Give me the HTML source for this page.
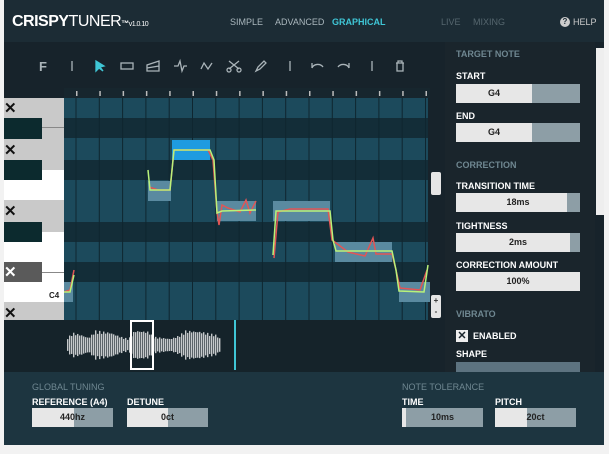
<!DOCTYPE html>
<html><head><meta charset="utf-8"><style>
*{margin:0;padding:0;box-sizing:border-box}
body{width:609px;height:454px;background:#f2f2f2;position:relative;overflow:hidden;font-family:"Liberation Sans",sans-serif;font-weight:bold}
.a{position:absolute}
#app{left:4px;top:0;width:600px;height:445px;background:#17232b}
.t{position:absolute;font-size:9px;color:#fff;white-space:nowrap}
.g{color:#6f8791;font-weight:normal}
.box{position:absolute;height:19px;background:#8d9ea6;overflow:hidden}
.box i{position:absolute;left:0;top:0;bottom:0;background:#e7e7e7}
.box span{position:absolute;left:0;right:0;top:4px;text-align:center;font-size:9px;color:#222}
.key{position:absolute;left:4px;width:60px;font-size:15px;line-height:1}
</style></head><body>
<div id="app" class="a"></div>
<div class="a" style="left:4px;top:0;width:600px;height:42px;background:#1c2c35"></div>
<div class="t" style="left:12px;top:13px;font-size:16px;letter-spacing:-0.5px">CRISPY<span style="font-weight:normal">TUNER</span><span style="font-size:8px">™</span><span style="font-size:7px;font-weight:normal">v1.0.10</span></div>
<div class="t" style="left:230px;top:17px;font-weight:normal;color:#aab7bd">SIMPLE</div>
<div class="t" style="left:275px;top:17px;font-weight:normal;color:#aab7bd">ADVANCED</div>
<div class="t" style="left:332px;top:17px;color:#3fc6d6">GRAPHICAL</div>
<div class="t" style="left:441px;top:17px;font-weight:normal;color:#55666e">LIVE</div>
<div class="t" style="left:473px;top:17px;font-weight:normal;color:#55666e">MIXING</div>
<div class="a" style="left:560px;top:17px;width:10px;height:10px;border-radius:50%;background:#ccc;color:#1c2c35;font-size:8px;text-align:center;line-height:10px">?</div>
<div class="t" style="left:573px;top:17px;font-weight:normal;color:#ccc">HELP</div>
<svg class="a" style="left:0;top:50px" width="440" height="32" stroke="#aab4b9" fill="none" stroke-width="1.3">
<text x="39" y="21" fill="#aab4b9" stroke="none" font-size="13" font-family="Liberation Sans" font-weight="bold">F</text>
<line x1="72" y1="11" x2="72" y2="21"/><line x1="290" y1="11" x2="290" y2="21"/><line x1="372" y1="11" x2="372" y2="21"/>
<path d="M96 11 L96 21 L99 18 L103 21 L100 17 L104 16 Z" fill="#3fc6d6" stroke="#3fc6d6"/>
<rect x="121" y="13" width="12" height="6"/>
<path d="M147 21 L159 21 L159 11 L147 15 Z M147 18 L159 16"/>
<path d="M174 16 L178 16 L180 11 L182 21 L184 16 L187 16"/>
<path d="M201 19 L204 13 L208 19 L212 13"/>
<path d="M229 11 L239 19 M239 11 L229 19"/><circle cx="229" cy="20" r="2"/><circle cx="239" cy="20" r="2"/>
<path d="M256 21 L258 17 L264 11 L266 13 L260 19 Z"/>
<path d="M312 18 A6 5 0 0 1 323 17 M312 18 L312 13"/>
<path d="M349 18 A6 5 0 0 0 338 17 M349 18 L349 13"/>
<path d="M396 13 L404 13 M398 13 L398 11 L402 11 L402 13 M397 13 L397 21 L403 21 L403 13"/>
</svg>
<div class="a" style="left:64px;top:88px;width:366px;height:10px;background:#17262e"></div>
<svg class="a" style="left:0;top:0" width="445" height="372">
<g fill="#1c4a5c">
<rect x="64" y="98" width="364" height="20"/><rect x="64" y="138" width="364" height="22"/><rect x="64" y="180" width="364" height="42"/><rect x="64" y="242" width="364" height="20"/><rect x="64" y="282" width="364" height="38"/></g>
<g fill="#132d38"><rect x="64" y="118" width="364" height="20"/><rect x="64" y="160" width="364" height="20"/><rect x="64" y="222" width="364" height="20"/><rect x="64" y="262" width="364" height="20"/></g>
<g stroke="#0f2630" stroke-width="1" id="vl"></g>
<g fill="#bbb" id="ticks"></g>
<g fill="#5a8aa0"><rect x="64" y="282" width="9" height="20"/><rect x="148" y="181" width="23" height="20"/><rect x="217" y="201" width="39" height="20"/><rect x="273" y="201" width="57" height="20"/><rect x="335" y="242" width="57" height="20"/><rect x="399" y="282" width="31" height="20"/></g>
<rect x="172" y="140" width="38" height="20" fill="#1e9be0"/>
<g fill="none" stroke-width="1.5">
<path stroke="#e25555" d="M64 292 L70 290 L74 270 M149 187 L158 190 L170 190 L174 150 L208 150 L213 160 L217 212 L219 225 L222 205 L228 208 L240 212 L246 200 L250 213 L256 201 M274 258 L278 212 L290 209 L328 209 L332 240 L348 252 L365 256 L373 238 L376 254 L392 254 L396 270 L400 288 L420 290 L427 270"/>
<path stroke="#b9f27a" d="M64 292 L70 292 L74 275 M148 170 L150 190 L170 190 L174 150 L210 150 L214 160 L217 213 L222 211 L256 210 M273 255 L276 211 L330 211 L333 240 L336 251 L392 251 L396 270 L399 291 L424 292 L428 265"/>
</g>
<rect x="64" y="320" width="366" height="52" fill="#15232a"/>
<rect x="4" y="320" width="60" height="52" fill="#15232a"/>
<g fill="#c5c9cb" id="wave"></g>
<rect x="131" y="321" width="22" height="48" fill="none" stroke="#fff" stroke-width="2"/>
<rect x="234" y="320" width="2" height="50" fill="#3fc6d6"/>
</svg>
<div class="a" style="left:4px;top:98px;width:60px;height:222px;background:#fff"></div>
<div class="a" style="left:4px;top:98px;width:60px;height:30px;background:#c9c9c9;border-bottom:1px solid #888"></div>
<div class="a" style="left:4px;top:128px;width:60px;height:42px;background:#c9c9c9"></div>
<div class="a" style="left:4px;top:200px;width:60px;height:32px;background:#c9c9c9"></div>
<div class="a" style="left:4px;top:302px;width:60px;height:18px;background:#c9c9c9"></div>
<div class="a" style="left:4px;top:118px;width:38px;height:21px;background:#0c2a2e"></div>
<div class="a" style="left:4px;top:160px;width:38px;height:20px;background:#0c2a2e"></div>
<div class="a" style="left:4px;top:222px;width:38px;height:20px;background:#0c2a2e"></div>
<div class="a" style="left:4px;top:262px;width:38px;height:20px;background:#5a5a5a"></div>
<div class="a" style="left:42px;top:272px;width:22px;height:1px;background:#888"></div>
<div class="key" style="top:101px;color:#111">✕</div>
<div class="key" style="top:143px;color:#111">✕</div>
<div class="key" style="top:204px;color:#111">✕</div>
<div class="key" style="top:265px;color:#fff">✕</div>
<div class="key" style="top:306px;color:#111">✕</div>
<div class="t" style="left:49px;top:291px;color:#222;font-size:8px">C4</div>
<div class="a" style="left:431px;top:172px;width:10px;height:23px;background:#e5e5e5;border-radius:2px"></div>
<div class="a" style="left:431px;top:295px;width:10px;height:23px;background:#e5e5e5;border-radius:2px;font-size:8px;color:#333;text-align:center;line-height:11px">+<br>-</div>
<div class="a" style="left:445px;top:42px;width:150px;height:330px;background:#1a252c"></div>
<div class="a" style="left:596px;top:48px;width:8px;height:167px;background:#eee"></div>
<div class="t g" style="left:456px;top:49px;font-weight:bold">TARGET NOTE</div>
<div class="t" style="left:456px;top:71px">START</div>
<div class="box" style="left:456px;top:84px;width:124px"><i style="width:76px"></i><span style="right:48px">G4</span></div>
<div class="t" style="left:456px;top:111px">END</div>
<div class="box" style="left:456px;top:123px;width:124px"><i style="width:76px"></i><span style="right:48px">G4</span></div>
<div class="t g" style="left:456px;top:160px;font-weight:bold">CORRECTION</div>
<div class="t" style="left:456px;top:181px">TRANSITION TIME</div>
<div class="box" style="left:456px;top:193px;width:124px"><i style="width:111px"></i><span>18ms</span></div>
<div class="t" style="left:456px;top:221px">TIGHTNESS</div>
<div class="box" style="left:456px;top:233px;width:124px"><i style="width:114px"></i><span>2ms</span></div>
<div class="t" style="left:456px;top:260px">CORRECTION AMOUNT</div>
<div class="box" style="left:456px;top:272px;width:124px"><i style="width:124px"></i><span>100%</span></div>
<div class="t g" style="left:456px;top:309px;font-weight:bold">VIBRATO</div>
<div class="a" style="left:456px;top:330px;width:12px;height:12px;background:#eee;color:#1a252c;font-size:11px;line-height:12px;text-align:center">✕</div>
<div class="t" style="left:473px;top:331px">ENABLED</div>
<div class="t" style="left:456px;top:349px">SHAPE</div>
<div class="a" style="left:456px;top:362px;width:124px;height:10px;background:#5d7380"></div>
<div class="a" style="left:4px;top:372px;width:600px;height:73px;background:#1d3540"></div>
<div class="t g" style="left:32px;top:382px">GLOBAL TUNING</div>
<div class="t" style="left:32px;top:397px">REFERENCE (A4)</div>
<div class="t" style="left:127px;top:397px">DETUNE</div>
<div class="box" style="left:32px;top:408px;width:81px"><i style="width:42px"></i><span>440hz</span></div>
<div class="box" style="left:127px;top:408px;width:81px"><i style="width:41px"></i><span>0ct</span></div>
<div class="t g" style="left:402px;top:382px">NOTE TOLERANCE</div>
<div class="t" style="left:402px;top:397px">TIME</div>
<div class="t" style="left:495px;top:397px">PITCH</div>
<div class="box" style="left:402px;top:408px;width:81px"><i style="width:4px"></i><span>10ms</span></div>
<div class="box" style="left:495px;top:408px;width:81px"><i style="width:32px"></i><span>20ct</span></div>
<script>
var s="http://www.w3.org/2000/svg";
var vl=document.getElementById('vl'),tk=document.getElementById('ticks'),wv=document.getElementById('wave');
for(var x=76;x<428;x+=23.3){var l=document.createElementNS(s,'line');l.setAttribute('x1',x);l.setAttribute('x2',x);l.setAttribute('y1',98);l.setAttribute('y2',320);vl.appendChild(l);
var r=document.createElementNS(s,'rect');r.setAttribute('x',x);r.setAttribute('y',91);r.setAttribute('width',1.5);r.setAttribute('height',5);tk.appendChild(r);}
var env=[[67,7],[72,12],[80,10],[88,7],[95,14],[110,12],[120,8],[128,6],[134,14],[148,13],[153,8],[170,6],[178,9],[185,14],[200,13],[215,10],[221,5]];
function E(x){for(var i=0;i<env.length-1;i++){if(x>=env[i][0]&&x<=env[i+1][0]){var t=(x-env[i][0])/(env[i+1][0]-env[i][0]);return env[i][1]*(1-t)+env[i+1][1]*t;}}return 4;}
for(var x=67;x<221;x+=2){var a=E(x)*(0.8+0.25*Math.abs(Math.sin(x*2.3)));
var r=document.createElementNS(s,'rect');r.setAttribute('x',x);r.setAttribute('y',345-a);r.setAttribute('width',1.4);r.setAttribute('height',a*2);wv.appendChild(r);}
</script>
</body></html>
